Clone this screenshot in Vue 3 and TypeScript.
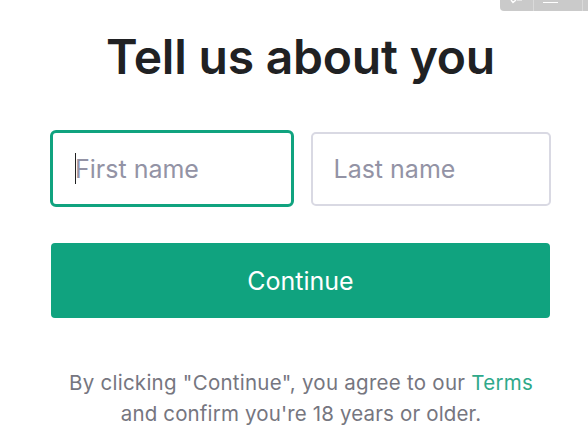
<script setup lang="ts">
import { ref } from 'vue'

const fields = ref([
  { id: 'first', label: 'First name', active: true },
  { id: 'last', label: 'Last name', active: false },
])
</script>

<template>
  <main class="page">
    <div class="toolbar">
      <svg viewBox="0 0 88 11" width="88" height="11">
        <path d="M33.500 0V11M82.500 0V11" stroke="#dadada" />
        <path d="M11 0L13 2.500L16 0" fill="none" stroke="#fff" stroke-width="1.400" />
        <path d="M17 0.500H22" stroke="#e4e4e4" />
        <path d="M43 2.500H58" stroke="#fff" />
      </svg>
    </div>
    <h1>Tell us about you</h1>
    <form class="form" @submit.prevent>
      <div class="row">
        <div v-for="f in fields" :key="f.id" class="field" :class="{ active: f.active }">
          <span v-if="f.active" class="caret"></span>
          <span class="ph">{{ f.label }}</span>
        </div>
      </div>
      <button class="submit">Continue</button>
    </form>
    <p class="terms">
      <span class="l1">By clicking "Continue", you agree to our <a>Terms</a></span>
      <span class="l2">and confirm you're 18 years or older.</span>
    </p>
  </main>
</template>

<style>
body { background: #fff; overflow: hidden; }
</style>
<style scoped>
.page { position: relative; box-sizing: border-box; width: 588px; height: 436px; padding: 29px 37px 0 50px; font-family: Inter, sans-serif; overflow: hidden; }
.toolbar { position: absolute; top: 0; right: 0; width: 88px; height: 11px; background: #cacaca; border-bottom-left-radius: 4px; overflow: hidden; }
.toolbar svg { display: block; }
h1 { margin: 0; height: 56px; line-height: 56px; text-align: center; font-size: 48px; font-weight: 600; color: #202123; white-space: nowrap; letter-spacing: -0.2px; }
.row { display: flex; align-items: center; gap: 17px; margin-top: 45px; }
.field { box-sizing: border-box; display: flex; align-items: center; width: 240px; height: 74px; padding-left: 21px; border: 2px solid #d9d9e3; border-radius: 5px; font-size: 25px; color: #9393a5; }
.field.active { width: 243.500px; height: 77px; padding-left: 22px; border: 3px solid #10a37f; border-radius: 6px; }
.caret { width: 1px; height: 31px; background: #202123; }
.active .ph { margin-left: -1px; }
.submit { display: block; width: 499px; height: 75px; margin: 36px 0 0 1px; padding: 0; border: 0; border-radius: 4px; background: #10a37f; color: #fff; font: 400 25px Inter, sans-serif; }
.terms { margin: 49px 0 0; padding-left: 1px; text-align: center; font-size: 20.500px; line-height: 31px; color: #76767f; white-space: nowrap; }
.terms span { display: block; }
.l1 { letter-spacing: 0.260px; }
.l2 { letter-spacing: 0.150px; }
.terms a { color: #2fa98a; }
</style>
